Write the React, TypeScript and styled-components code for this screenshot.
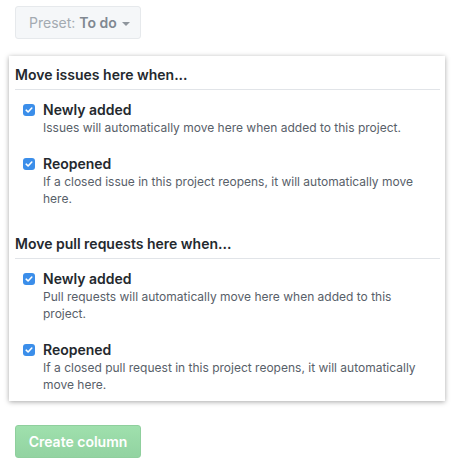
import styled, { createGlobalStyle } from "styled-components";
import { FC } from "react";

const GlobalStyle = createGlobalStyle`
body {
    margin: 0;
    background: #fff;
    font-family: Inter, "Liberation Sans", Arial, sans-serif;
    color: #24292e;
}
`

interface Option {
    label: string;
    note: string;
}

const groups: { title: string; options: Option[] }[] = [
    {
        title: `Move issues here when...`,
        options: [
            { label: `Newly added`, note: `Issues will automatically move here when added to this project.` },
            { label: `Reopened`, note: `If a closed issue in this project reopens, it will automatically move here.` },
        ],
    },
    {
        title: `Move pull requests here when...`,
        options: [
            { label: `Newly added`, note: `Pull requests will automatically move here when added to this project.` },
            { label: `Reopened`, note: `If a closed pull request in this project reopens, it will automatically move here.` },
        ],
    },
]

const Check: FC = () =>
    <CheckBox>
        <svg width="8" height="8" viewBox="0 0 8 8">
            <path d="M1.2 4.2 L3.1 6 L6.8 2" stroke="#fff" strokeWidth="1.6" fill="none" strokeLinecap="round" strokeLinejoin="round" />
        </svg>
    </CheckBox>

const App: FC = () =>
    <Page>
        <GlobalStyle />
        <PresetButton>
            <PresetLabel>Preset:</PresetLabel>
            <PresetValue>To do</PresetValue>
            <Caret />
        </PresetButton>
        <Card>
            {groups.map((group, i) =>
                <Group key={group.title} first={i === 0}>
                    <GroupTitle>{group.title}</GroupTitle>
                    {group.options.map(option =>
                        <OptionRow key={option.label}>
                            <Check />
                            <OptionText>
                                <OptionLabel>{option.label}</OptionLabel>
                                <OptionNote>{option.note}</OptionNote>
                            </OptionText>
                        </OptionRow>
                    )}
                </Group>
            )}
        </Card>
        <CreateButton>Create column</CreateButton>
    </Page>

export default App;

const Page = styled.div`
padding: 6px 10px 0 9px;
display: flex;
flex-direction: column;
align-items: flex-start;
`

const PresetButton = styled.div`
margin-left: 6px;
width: 126px;
height: 33px;
box-sizing: border-box;
display: flex;
align-items: center;
padding-left: 13px;
background: #f5f7f9;
border: 1px solid #e6e9ec;
border-radius: 3px;
font-size: 14px;
`

const PresetLabel = styled.span`
color: #a3aab1;
margin-right: 4px;
`

const PresetValue = styled.span`
color: #808891;
font-weight: 600;
`

const Caret = styled.span`
margin-left: 5px;
margin-top: 2px;
border-left: 4px solid transparent;
border-right: 4px solid transparent;
border-top: 4px solid #8f969d;
`

const Card = styled.div`
margin-top: 17px;
width: 436px;
box-sizing: border-box;
padding: 9px 5px 8px 6px;
background: #fff;
box-shadow: 0 1px 5px rgba(0, 0, 0, 0.35);
`

const Group = styled.div<{ first?: boolean }>`
margin-top: ${p => p.first ? 0 : 27}px;
`

const GroupTitle = styled.div`
font-size: 14px;
font-weight: 600;
line-height: 20px;
padding-bottom: 4px;
border-bottom: 1px solid #e1e4e8;
margin-bottom: 11px;
`

const OptionRow = styled.div`
display: flex;
align-items: flex-start;
padding-left: 8px;
padding-right: 12px;
& + & {
    margin-top: 19px;
}
`

const CheckBox = styled.div`
flex: none;
width: 12px;
height: 12px;
margin-top: 3px;
border-radius: 3px;
background: #3b8eea;
display: flex;
align-items: center;
justify-content: center;
`

const OptionText = styled.div`
margin-left: 8px;
`

const OptionLabel = styled.div`
font-size: 14px;
font-weight: 600;
line-height: 18px;
`

const OptionNote = styled.div`
font-size: 12px;
line-height: 17px;
color: #586069;
`

const CreateButton = styled.div`
margin: 24px 0 0 6px;
width: 126px;
height: 33px;
box-sizing: border-box;
display: flex;
align-items: center;
justify-content: center;
background: linear-gradient(#9fe0ad, #92d3a1);
border: 1px solid #8fcf9d;
border-radius: 3px;
color: #fff;
font-size: 14px;
font-weight: 600;
`
